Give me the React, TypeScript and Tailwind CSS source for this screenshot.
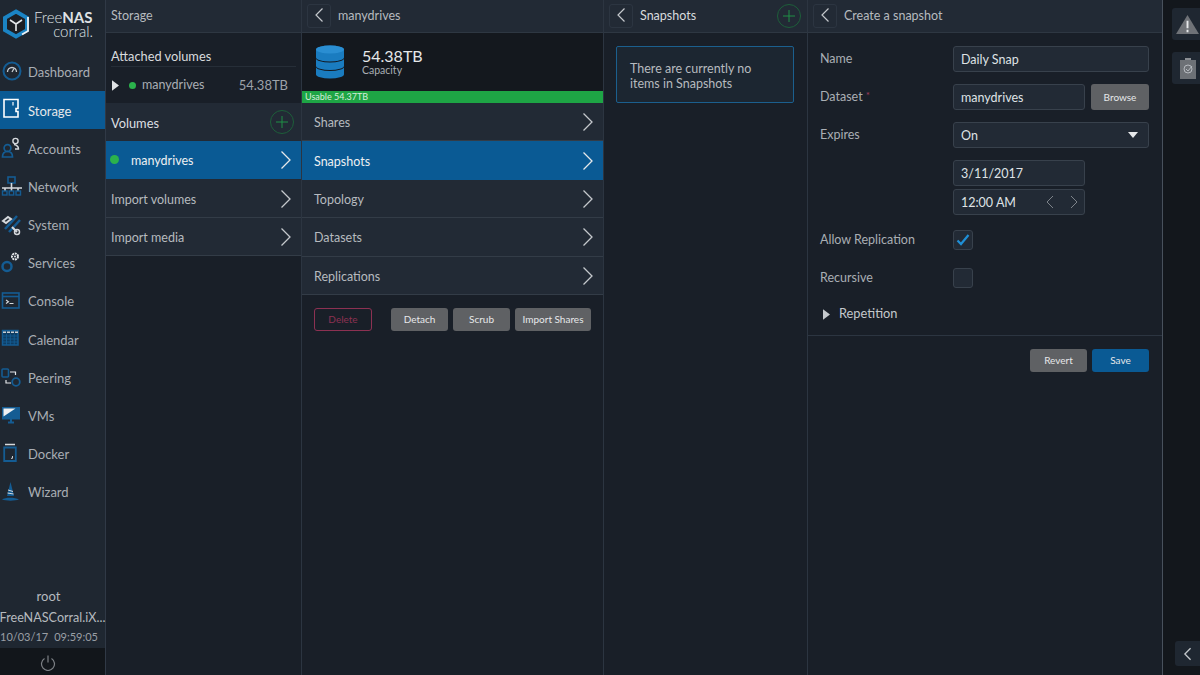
import { ReactNode } from "react";

const BLUE = "#145c93";

// sidebar icons, drawn to a 24x24 box
const icons: Record<string, ReactNode> = {
  Dashboard: (
    <>
      <circle cx="11" cy="11" r="8.5" fill="none" stroke={BLUE} strokeWidth="2" />
      <path d="M6.5 12a4.5 4.5 0 0 1 9 0" fill="none" stroke="#c9ced3" strokeWidth="1.3" />
      <path d="M11 12l2-3.5" stroke="#c9ced3" strokeWidth="1.3" />
    </>
  ),
  Storage: (
    <>
      <path d="M3 1.5h14v9h-2v3h2v5.5H3z" fill="none" stroke="#fff" strokeWidth="1.6" />
      <path d="M12 4v3.5" stroke="#fff" strokeWidth="1.2" />
    </>
  ),
  Accounts: (
    <>
      <circle cx="6.5" cy="12" r="3.4" fill="none" stroke={BLUE} strokeWidth="1.7" />
      <path d="M1.5 21c0-4 2-5.5 5-5.5s5 1.5 5 5.5z" fill="none" stroke={BLUE} strokeWidth="1.7" />
      <circle cx="14.5" cy="5" r="2.6" fill="none" stroke="#d5d9dd" strokeWidth="1.4" />
      <path d="M13 8.5c2 .5 4.5 1 4.5 4.5H14" fill="none" stroke="#d5d9dd" strokeWidth="1.4" />
    </>
  ),
  Network: (
    <>
      <rect x="7" y="2" width="7" height="6" fill="none" stroke={BLUE} strokeWidth="1.6" />
      <path d="M1 13h20M10.5 8v5M4 13v3M10.5 13v3M17 13v3" stroke="#d5d9dd" strokeWidth="1.6" />
      <rect x="1.5" y="16" width="4.5" height="4" fill="none" stroke={BLUE} strokeWidth="1.4" />
      <rect x="8.2" y="16" width="4.5" height="4" fill="none" stroke={BLUE} strokeWidth="1.4" />
      <rect x="15" y="16" width="4.5" height="4" fill="none" stroke={BLUE} strokeWidth="1.4" />
    </>
  ),
  System: (
    <>
      <path d="M16 3L4 16M19 7L8 19" stroke={BLUE} strokeWidth="2.5" />
      <path d="M2 8l5-4 3 2-5 4zM11 14l5 5" fill="none" stroke="#d5d9dd" strokeWidth="2" />
      <circle cx="16" cy="19" r="2.5" fill="none" stroke="#d5d9dd" strokeWidth="1.5" />
    </>
  ),
  Services: (
    <>
      <circle cx="6" cy="15.5" r="4.5" fill="none" stroke={BLUE} strokeWidth="2.5" />
      <circle cx="14" cy="5.5" r="3" fill="none" stroke="#e3e6e9" strokeWidth="2" strokeDasharray="2 0.7" />
      <circle cx="14" cy="5.5" r="1" fill="#e3e6e9" />
    </>
  ),
  Console: (
    <>
      <rect x="1.5" y="4" width="16.5" height="15" fill="none" stroke={BLUE} strokeWidth="1.6" />
      <path d="M1.5 7.5H18" stroke={BLUE} strokeWidth="1.6" />
      <path d="M5 11l2.5 1.700L5 14.500M8.500 14.500h4" fill="none" stroke="#d5d9dd" strokeWidth="1.1" />
    </>
  ),
  Calendar: (
    <>
      <rect x="1.5" y="3.5" width="15.5" height="14.5" fill="#0e3d63" stroke={BLUE} strokeWidth="1.5" />
      <path d="M2 5.3h15" stroke="#c9ced3" strokeWidth="1.5" strokeDasharray="3 1" />
      <path d="M1.500 9H17M1.500 12H17M1.500 15H17M5.500 7v11M9.300 7v11M13.200 7v11" stroke={BLUE} strokeWidth="0.9" />
    </>
  ),
  Peering: (
    <>
      <rect x="1" y="3" width="6.5" height="8" rx="1" fill="none" stroke={BLUE} strokeWidth="1.6" />
      <circle cx="15" cy="16" r="3.8" fill="none" stroke={BLUE} strokeWidth="1.8" />
      <path d="M9 6h5.500v3M5 14v3h5" fill="none" stroke="#e3e6e9" strokeWidth="1.2" />
    </>
  ),
  VMs: (
    <>
      <path d="M1 3h18v12.500H1z" fill={BLUE} />
      <path d="M2.500 4.500h12l-12 8z" fill="#eef0f2" />
      <path d="M7 18.500h6M10 15v3.500" stroke={BLUE} strokeWidth="2" />
    </>
  ),
  Docker: (
    <>
      <path d="M4 2.500h10" stroke="#d5d9dd" strokeWidth="1.5" />
      <path d="M3.200 5.500h11.600V19H3.200z" fill="none" stroke={BLUE} strokeWidth="1.8" />
      <path d="M11.500 14v2.300H10" fill="none" stroke="#c9ced3" strokeWidth="1" />
    </>
  ),
  Wizard: (
    <>
      <path d="M9.500 2L6 16h7z" fill={BLUE} />
      <path d="M7 10l5 1.500M6.500 13l6 1" stroke="#d5d9dd" strokeWidth="1" />
      <path d="M1 19.500c3-2.500 13-2.500 17 0-4 1.500-13 1.500-17 0z" fill={BLUE} />
    </>
  ),
};

const navItems = ["Dashboard", "Storage", "Accounts", "Network", "System", "Services", "Console", "Calendar", "Peering", "VMs", "Docker", "Wizard"];

const Chevron = ({ color = "#c4c8cc" }: { color?: string }) => (
  <svg viewBox="0 0 12 20" className="w-3 h-5 mt-[1px]" fill="none" stroke={color} strokeWidth="1.3">
    <path d="M1.5 1.5L10 10l-8.500 8.500" />
  </svg>
);

const PlusCircle = () => (
  <div className="w-6 h-6 rounded-full border border-[#1d5f3a] flex items-center justify-center">
    <svg viewBox="0 0 12 12" className="w-3 h-3" stroke="#1f8f46" strokeWidth="1">
      <path d="M6 0v12M0 6h12" />
    </svg>
  </div>
);

const BackButton = () => (
  <div className="w-6 h-6 rounded-[3px] border border-[#2c3541] flex items-center justify-center">
    <svg viewBox="0 0 10 16" className="w-[10px] h-4 mb-[2px]" fill="none" stroke="#c4c8cc" strokeWidth="1.2">
      <path d="M8.500 1.500L2 8l6.500 6.500" />
    </svg>
  </div>
);

const Header = ({ children, back = true, add = false }: { children: ReactNode; back?: boolean; add?: boolean }) => (
  <div className="h-[33px] shrink-0 bg-[#222a35] border-b border-[#2e3742] flex items-center pl-[5px] pr-[6px] gap-[7px]">
    {back && <BackButton />}
    <span className={`text-[12.5px] flex-1 ${add ? "text-[#d8dbde]" : "text-[#b6babf]"}`}>{children}</span>
    {add && <PlusCircle />}
  </div>
);

const Row = ({ label, active = false, dot = false, inset = "pl-[12px]" }: { label: string; active?: boolean; dot?: boolean; inset?: string }) => (
  <div className={`h-[38.4px] flex items-center pr-[9px] border-b ${active ? "bg-[#0a5a94] border-[#0a5a94] text-[#eef0f2]" : "bg-[#222a35] border-[#333c47] text-[#b6babf]"} ${inset}`}>
    {dot && <span className="w-[9px] h-[9px] rounded-full bg-[#2bb24c] mr-[12px]" />}
    <span className="text-[12.5px] flex-1 pt-[4px]">{label}</span>
    <Chevron color={active ? "#e6e8ea" : "#c4c8cc"} />
  </div>
);

const Button = ({ children, w, color = "bg-[#5f6164] text-[#e6e8ea]" }: { children: ReactNode; w: string; color?: string }) => (
  <div className={`h-[23px] rounded-[3px] flex items-center justify-center text-[10px] ${w} ${color}`}>{children}</div>
);

const Field = ({ children, w = "w-[196px]", right }: { children: ReactNode; w?: string; right?: ReactNode }) => (
  <div className={`h-[26px] ${w} rounded-[3px] bg-[#222a35] border border-[#38414c] flex items-center justify-between pl-[7px] pr-[7px] text-[12.5px] text-[#dfe2e5]`}>
    <span className="pt-[2px]">{children}</span>
    {right}
  </div>
);

const Label = ({ children }: { children: ReactNode }) => (
  <div className="w-[133px] shrink-0 text-[12.5px] text-[#a9aeb4]">{children}</div>
);

export default function App() {
  return (
    <div className="w-[1200px] h-[675px] overflow-hidden flex bg-[#191f28] font-['Lato',sans-serif]">
      {/* main nav */}
      <aside className="w-[106px] shrink-0 bg-[#1f2731] border-r border-[#303946] flex flex-col">
        <div className="h-[53px] relative shrink-0">
          <svg viewBox="0 0 28 30" className="absolute left-[2px] top-[9px] w-[28px] h-[30px]">
            <path d="M14 2.500l11 6.300v12.400L14 27.500 3 21.200V8.800z" fill="#1d1f24" stroke="#1b84c4" strokeWidth="4" />
            <path d="M14 15v7M14 15L8 11M14 15l6-4" stroke="#e8eaec" strokeWidth="1.6" />
            <path d="M26 8v14l-6 3.500" fill="none" stroke="#eef0f2" strokeWidth="1.8" />
          </svg>
          <div className="absolute left-[34px] top-[10px] text-[15px] leading-[14px] font-light text-[#dfe2e5] whitespace-nowrap">
            Free<span className="font-bold">NAS</span>
          </div>
          <div className="absolute right-[12px] top-[24px] text-[15px] leading-[14px] font-light text-[#dfe2e5]">corral.</div>
        </div>
        <nav className="flex flex-col">
          {navItems.map((item) => (
            <div key={item} className={`h-[38.2px] flex items-center pl-[1px] ${item === "Storage" ? "bg-[#0a5a94] text-[#e6e8ea]" : "text-[#a9aeb4]"}`}>
              <svg viewBox="0 0 24 24" className="w-6 h-6 shrink-0">{icons[item]}</svg>
              <span className="text-[13px] ml-[3px] pt-[2px]">{item}</span>
            </div>
          ))}
        </nav>
        <div className="mt-auto flex flex-col items-center text-[#b6babf]">
          <div className="text-[13px] h-[18px] leading-[18px] mr-[8px]">root</div>
          <div className="text-[12.6px] h-[20px] leading-[20px] mt-[3px] whitespace-nowrap">FreeNASCorral.iX...</div>
          <div className="text-[11px] h-[17px] leading-[17px] mb-[3px] w-full flex justify-between text-[#9a9fa5] pr-[7px]">
            <span>10/03/17</span>
            <span>09:59:05</span>
          </div>
          <div className="h-[27px] w-full bg-[#12161b] flex items-center justify-center pr-[10px] pt-[3px]">
            <svg viewBox="0 0 16 16" className="w-4 h-4" fill="none" stroke="#7d8186" strokeWidth="1.2">
              <path d="M4.500 3.500a6.500 6.500 0 1 0 7 0M8 .5v7" />
            </svg>
          </div>
        </div>
      </aside>

      {/* storage column */}
      <section className="w-[196px] shrink-0 border-r border-[#2c3541] flex flex-col">
        <Header back={false}>Storage</Header>
        <div className="h-[70px] shrink-0 bg-[#191f28] px-[5px] pt-[15px]">
          <div className="text-[12.8px] leading-[17px] text-[#d8dbde] border-b border-[#262e38] pb-[1px]">Attached volumes</div>
          <div className="flex items-center h-[21px] mt-[8px] text-[12.5px] text-[#a9aeb4]">
            <svg viewBox="0 0 8 12" className="w-[7px] h-[11px] ml-[1px]" fill="#dfe2e5"><path d="M0 0l8 6-8 6z" /></svg>
            <span className="w-[7px] h-[7px] rounded-full bg-[#2bb24c] ml-[10px] mr-[6px]" />
            <span className="flex-1">manydrives</span>
            <span className="text-[13px] text-[#9da2a8] mr-[8px]">54.38TB</span>
          </div>
        </div>
        <div className="h-[38px] shrink-0 bg-[#222a35] flex items-center pl-[5px] pr-[7px]">
          <span className="text-[12.8px] flex-1 text-[#dcdfe2] pt-[4px]">Volumes</span>
          <PlusCircle />
        </div>
        <Row label="manydrives" active dot inset="pl-[4px]" />
        <Row label="Import volumes" inset="pl-[5px]" />
        <Row label="Import media" inset="pl-[5px]" />
      </section>

      {/* volume column */}
      <section className="w-[302px] shrink-0 border-r border-[#2c3541] flex flex-col">
        <Header>manydrives</Header>
        <div className="h-[58px] shrink-0 bg-[#14181e] flex items-center pl-[14px]">
          <svg viewBox="0 0 28 34" className="w-[28px] h-[34px]">
            <path d="M0 4.500a14 4 0 0 1 28 0v8a14 4 0 0 1-28 0z" fill="#1a7cc0" />
            <path d="M0 13.500a14 4 0 0 0 28 0V21a14 4 0 0 1-28 0z" fill="#1a7cc0" />
            <path d="M0 22a14 4 0 0 0 28 0v7.500a14 4 0 0 1-28 0z" fill="#1a7cc0" />
            <ellipse cx="14" cy="4.500" rx="14" ry="4" fill="#2a8ed2" />
          </svg>
          <div className="ml-[18px] mt-[-1px]">
            <div className="text-[16px] leading-[18px] text-[#e6e8ea]">54.38TB</div>
            <div className="text-[10.5px] leading-[11px] text-[#a9aeb4]">Capacity</div>
          </div>
        </div>
        <div className="h-[12px] shrink-0 bg-[#1ea545] text-[9px] leading-[12px] text-[#d5eedb] pl-[3px]">Usable 54.37TB</div>
        <Row label="Shares" />
        <Row label="Snapshots" active />
        <Row label="Topology" />
        <Row label="Datasets" />
        <Row label="Replications" />
        <div className="flex pt-[13px] pl-[12px]">
          <Button w="w-[58px]" color="border border-[#8c3152] text-[#8c3152]">Delete</Button>
          <div className="flex gap-[5px] ml-[19px]">
            <Button w="w-[57px]">Detach</Button>
            <Button w="w-[57px]">Scrub</Button>
            <Button w="w-[76px]">Import Shares</Button>
          </div>
        </div>
      </section>

      {/* snapshots column */}
      <section className="w-[204px] shrink-0 border-r border-[#2c3541] flex flex-col">
        <Header add>Snapshots</Header>
        <div className="ml-[12px] mr-[13px] mt-[13px] h-[57px] bg-[#1c2631] rounded-[2px] border border-[#1b5f8e] flex items-center px-[13px] pt-[3px] text-[12.5px] leading-[15px] text-[#b6babf]">
          There are currently no items in Snapshots
        </div>
      </section>

      {/* create form */}
      <section className="w-[355px] shrink-0 border-r border-[#48515c] flex flex-col">
        <Header>Create a snapshot</Header>
        <div className="pl-[12px] pr-[13px] pt-[13px] flex flex-col">
          <div className="flex items-center">
            <Label>Name</Label>
            <Field>Daily Snap</Field>
          </div>
          <div className="flex items-center mt-[12px]">
            <Label>
              Dataset <span className="text-[#a33c5c] text-[10px] align-top">*</span>
            </Label>
            <Field w="w-[132px]">manydrives</Field>
            <Button w="w-[58px] h-[26px] ml-[6px]">Browse</Button>
          </div>
          <div className="flex items-center mt-[12px]">
            <Label>Expires</Label>
            <Field right={<span className="w-0 h-0 border-l-[5px] border-r-[5px] border-t-[6px] border-l-transparent border-r-transparent border-t-[#e6e8ea] mr-[3px]" />}>On</Field>
          </div>
          <div className="ml-[133px] mt-[12px] flex flex-col gap-[3px]">
            <Field w="w-[132px]">3/11/2017</Field>
            <Field
              w="w-[132px]"
              right={
                <span className="flex gap-[16px] mr-[-1px]">
                  <svg viewBox="0 0 8 14" className="w-[8px] h-[14px]" fill="none" stroke="#7d838a" strokeWidth="1"><path d="M7 1L1 7l6 6" /></svg>
                  <svg viewBox="0 0 8 14" className="w-[8px] h-[14px]" fill="none" stroke="#7d838a" strokeWidth="1"><path d="M1 1l6 6-6 6" /></svg>
                </span>
              }
            >
              12:00 AM
            </Field>
          </div>
          <div className="flex items-center mt-[15px] h-[20px]">
            <Label>Allow Replication</Label>
            <div className="w-[20px] h-[20px] rounded-[3px] bg-[#222a35] border border-[#38414c] flex items-center justify-center">
              <svg viewBox="0 0 14 12" className="w-[14px] h-[12px]" fill="none" stroke="#1f8fd6" strokeWidth="2.2"><path d="M1.500 6.500L5 10l7.500-9" /></svg>
            </div>
          </div>
          <div className="flex items-center mt-[18px] h-[20px]">
            <Label>Recursive</Label>
            <div className="w-[20px] h-[20px] rounded-[3px] bg-[#222a35] border border-[#38414c]" />
          </div>
          <div className="flex items-center mt-[16px] h-[20px] pl-[3px]">
            <svg viewBox="0 0 8 12" className="w-[7px] h-[11px]" fill="#c4c8cc"><path d="M0 0l8 6-8 6z" /></svg>
            <span className="text-[12.8px] ml-[9px] text-[#c4c8cc]">Repetition</span>
          </div>
        </div>
        <div className="border-t border-[#2c3541] mt-[11px] pt-[13px] pr-[13px] flex justify-end gap-[5px]">
          <Button w="w-[57px]">Revert</Button>
          <Button w="w-[57px]" color="bg-[#0a5a94] text-[#e6e8ea]">Save</Button>
        </div>
      </section>

      {/* right rail */}
      <aside className="flex-1 bg-[#13171c] flex flex-col pl-[9px] pt-[8px] relative">
        <div className="w-[28px] h-[32px] bg-[#1f2731] rounded-l-[3px] flex items-center justify-center pl-[3px]">
          <svg viewBox="0 0 24 22" className="w-[23px] h-[21px]">
            <path d="M12 1l12 20H0z" fill="#6f7277" />
            <path d="M12 7v8M12 16.500V19" stroke="#e6e8ea" strokeWidth="2" />
          </svg>
        </div>
        <div className="w-[28px] h-[32px] bg-[#1f2731] rounded-l-[3px] flex items-center justify-center mt-[12px] pl-[3px]">
          <svg viewBox="0 0 16 22" className="w-[16px] h-[22px]">
            <path d="M0 3h16v19H0z" fill="#6d7176" />
            <path d="M5 3V1h6v2z" fill="#8a8e93" />
            <circle cx="8" cy="12" r="4" fill="none" stroke="#b6babf" strokeWidth="1" />
            <path d="M6 12l2 2 4-5" fill="none" stroke="#b6babf" strokeWidth="1" />
          </svg>
        </div>
        <div className="absolute right-0 bottom-[9px] w-[25px] h-[25px] bg-[#1f2731] rounded-l-[3px] flex items-center justify-center">
          <svg viewBox="0 0 10 16" className="w-[9px] h-[14px]" fill="none" stroke="#c4c8cc" strokeWidth="1.5"><path d="M8.500 1.500L2 8l6.500 6.500" /></svg>
        </div>
      </aside>
    </div>
  );
}
